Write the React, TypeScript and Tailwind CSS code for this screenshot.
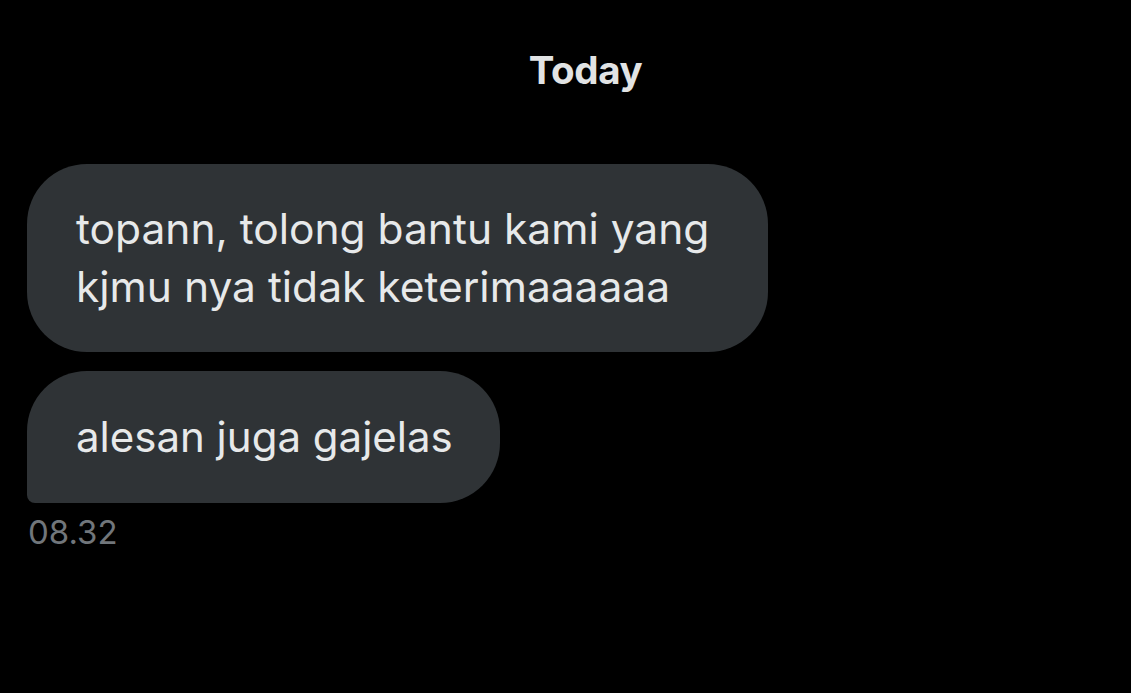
import React from 'react';

const App = () => {
  return (
    <div
      className="w-[1131px] h-[693px] bg-black overflow-hidden"
      style={{ fontFamily: 'Inter, "Noto Sans", sans-serif' }}
    >
      <div className="flex justify-center pt-[46px] pl-[40px]">
        <span className="text-[38.5px] font-bold text-[#e1e3e4] leading-[48px] tracking-[-0.4px]">Today</span>
      </div>

      <div className="flex flex-col items-start gap-[19px] pl-[27px] mt-[70px]">
        <div className="bg-[#2f3336] rounded-[60px] w-[741px] h-[188px] pl-[49px] pt-[36px]">
          <p className="text-[42.5px] text-[#e7e9ea] leading-[58px]">
            topann, tolong bantu kami yang
            <br />
            kjmu nya tidak keterimaaaaaa
          </p>
        </div>
        <div className="bg-[#2f3336] rounded-[60px] rounded-bl-[8px] w-[473px] h-[132px] pl-[49px] flex items-center">
          <p className="text-[42px] text-[#e7e9ea] leading-[58px]">alesan juga gajelas</p>
        </div>
      </div>

      <div className="pl-[28px] pt-[9px]">
        <span className="text-[33px] text-[#71767b] leading-[40px]">08.32</span>
      </div>
    </div>
  );
};

export default App;
